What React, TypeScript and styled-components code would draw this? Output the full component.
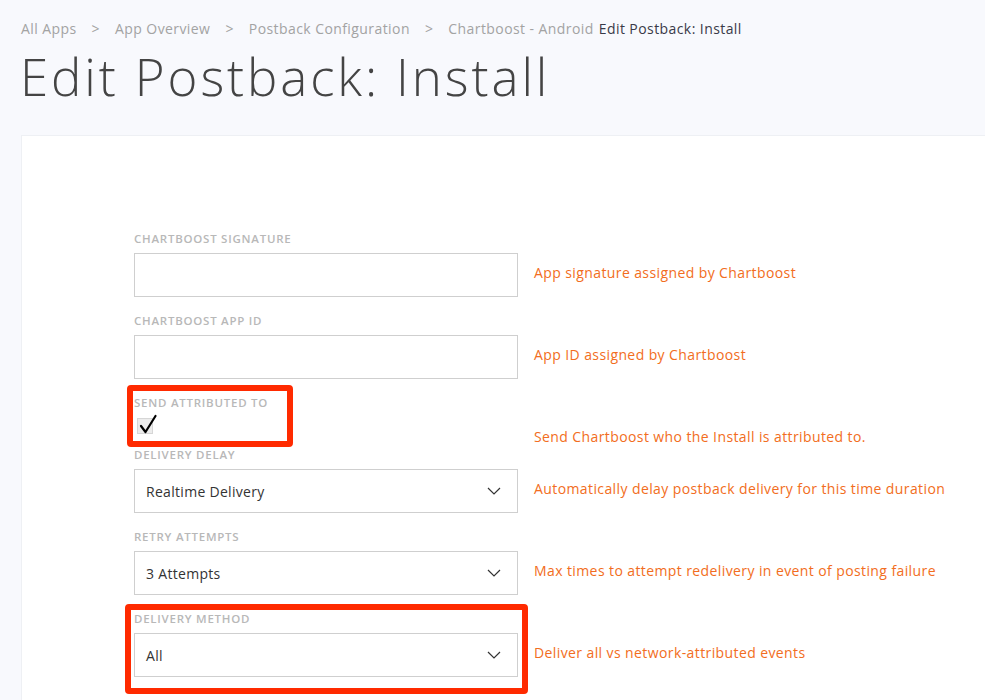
import React from 'react';
import styled, { createGlobalStyle } from 'styled-components';

const GlobalStyle = createGlobalStyle`
  body {
    margin: 0;
    background: #f8f9fd;
    font-family: 'Open Sans', 'Liberation Sans', sans-serif;
    overflow: hidden;
  }
`;

const Page = styled.div`
  padding: 20px 0 0 21px;
  height: 700px;
  box-sizing: border-box;
`;

const Crumbs = styled.nav`
  display: flex;
  align-items: center;
  font-size: 14px;
  line-height: 18px;
  letter-spacing: 0.42px;
  color: #a3a3a3;
`;

const Sep = styled.span`
  margin: 0 15px;
`;

const Current = styled.span`
  color: #3a3a48;
  margin-left: 5px;
`;

const Title = styled.h1`
  margin: 2px 0 0 -1px;
  font-family: 'Open Sans', 'Liberation Sans', sans-serif;
  font-weight: 300;
  font-size: 51px;
  line-height: 72px;
  color: #444;
  letter-spacing: 2.9px;
`;

const Card = styled.section`
  margin-top: 23px;
  background: #fff;
  border: 1px solid #eef0f4;
  border-right: none;
  padding: 96px 0 0 112px;
  height: 600px;
`;

const Row = styled.div`
  display: grid;
  grid-template-columns: 384px 1fr;
  column-gap: 16px;
`;

const Field = styled.div<{ $compact?: boolean }>`
  position: relative;
  padding-bottom: ${(p) => (p.$compact ? 14 : 17)}px;
`;

const Label = styled.div`
  font-size: 11.5px;
  font-weight: 600;
  line-height: 14px;
  color: #b8b8b8;
  text-transform: uppercase;
  letter-spacing: 0.75px;
  margin-bottom: 7px;
`;

const Input = styled.div`
  height: 44px;
  border: 1px solid #cfcfcf;
  box-sizing: border-box;
  background: #fff;
`;

const Select = styled(Input)`
  display: flex;
  align-items: center;
  justify-content: space-between;
  padding: 0 16px 0 11px;
  font-size: 14px;
  letter-spacing: 0.3px;
  color: #333;
`;

const Check = styled.div`
  position: relative;
  width: 16px;
  height: 16px;
  margin: 8px 0 0 3px;
  background: #ececec;
  border: 1px solid #d6d6d6;
  box-sizing: border-box;
  svg {
    position: absolute;
    left: 1px;
    top: -5px;
  }
`;

const Help = styled.div`
  padding-top: 31px;
  font-size: 14px;
  line-height: 20px;
  letter-spacing: 0.4px;
  color: #f26d21;
`;

const Highlight = styled.div<{ $top: number; $left: number; $w: number; $h: number }>`
  position: absolute;
  top: ${(p) => p.$top}px;
  left: ${(p) => p.$left}px;
  width: ${(p) => p.$w}px;
  height: ${(p) => p.$h}px;
  border: 6px solid #ff2a00;
  border-radius: 4px;
  box-sizing: border-box;
  pointer-events: none;
`;

function Chevron() {
  return (
    <svg width="14" height="8" viewBox="0 0 14 8" fill="none">
      <path d="M1 1l6 6 6-6" stroke="#333" strokeWidth="1.2" />
    </svg>
  );
}

function SelectField({ label, value, help, children }: { label: string; value: string; help: string; children?: React.ReactNode }) {
  return (
    <Row>
      <Field>
        <Label>{label}</Label>
        <Select>
          <span>{value}</span>
          <Chevron />
        </Select>
        {children}
      </Field>
      <Help>{help}</Help>
    </Row>
  );
}

export default function App() {
  return (
    <Page>
      <GlobalStyle />
      <Crumbs>
        <span>All Apps</span>
        <Sep>&gt;</Sep>
        <span>App Overview</span>
        <Sep>&gt;</Sep>
        <span>Postback Configuration</span>
        <Sep>&gt;</Sep>
        <span>Chartboost - Android</span>
        <Current>Edit Postback: Install</Current>
      </Crumbs>
      <Title>Edit Postback: Install</Title>
      <Card>
        <Row>
          <Field>
            <Label>Chartboost Signature</Label>
            <Input />
          </Field>
          <Help>App signature assigned by Chartboost</Help>
        </Row>
        <Row>
          <Field>
            <Label>Chartboost App ID</Label>
            <Input />
          </Field>
          <Help>App ID assigned by Chartboost</Help>
        </Row>
        <Row>
          <Field $compact>
            <Label>Send Attributed To</Label>
            <Check>
              <svg width="19" height="21" viewBox="0 0 19 21" fill="none">
                <path d="M2 12l4.5 6L16.5 2" stroke="#000" strokeWidth="2.2" strokeLinecap="round" strokeLinejoin="round" />
              </svg>
            </Check>
            <Highlight $top={-11} $left={-7} $w={166} $h={62} />
          </Field>
          <Help>Send Chartboost who the Install is attributed to.</Help>
        </Row>
        <SelectField label="Delivery Delay" value="Realtime Delivery" help="Automatically delay postback delivery for this time duration" />
        <SelectField label="Retry Attempts" value="3 Attempts" help="Max times to attempt redelivery in event of posting failure" />
        <SelectField label="Delivery Method" value="All" help="Deliver all vs network-attributed events">
          <Highlight $top={-8} $left={-9} $w={403} $h={90} />
        </SelectField>
      </Card>
    </Page>
  );
}
